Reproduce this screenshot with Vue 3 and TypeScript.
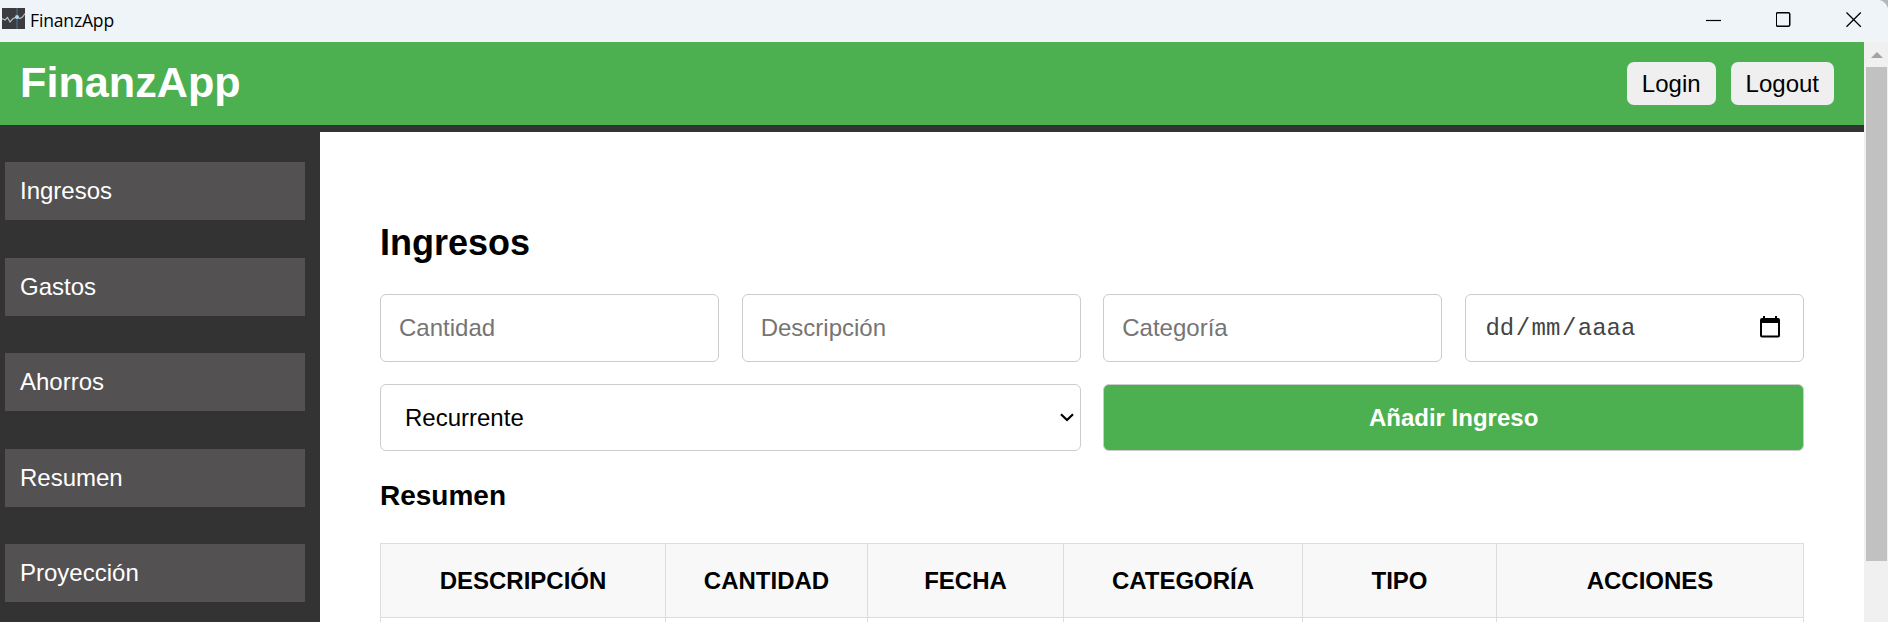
<script setup lang="ts">
import { ref } from 'vue'

interface Column {
  label: string
  width: number
}

const sections: string[] = ['Ingresos', 'Gastos', 'Ahorros', 'Resumen', 'Proyección']

const columns: Column[] = [
  { label: 'Descripción', width: 285 },
  { label: 'Cantidad', width: 202 },
  { label: 'Fecha', width: 196 },
  { label: 'Categoría', width: 239 },
  { label: 'Tipo', width: 194 },
  { label: 'Acciones', width: 307 },
]

const amount = ref('')
const description = ref('')
const category = ref('')
const kind = ref('Recurrente')
</script>

<template>
  <div class="window">
    <div class="titlebar">
      <svg class="app-icon" width="23" height="21" viewBox="0 0 23 21">
        <rect width="23" height="21" fill="#3a3c3f" />
        <path d="M15 0V21" stroke="#54728c" stroke-width="1" />
        <path d="M0 10.500L3 12L5.500 9.500L8 14L11 10.500L15 9L18 10.500L20.500 9L23 5.500" fill="none" stroke="#b9bec2" stroke-width="1.200" />
        <circle cx="15" cy="9" r="2" fill="#b4d3ee" />
      </svg>
      <span class="app-name">FinanzApp</span>
      <div class="controls">
        <svg width="16" height="16" viewBox="0 0 16 16"><path d="M0 8.500H15" stroke="#000" stroke-width="1.200" /></svg>
        <svg width="16" height="16" viewBox="0 0 16 16"><rect x=".25" y=".75" width="13.500" height="13.500" rx="1.500" fill="none" stroke="#000" stroke-width="1.500" /></svg>
        <svg width="16" height="16" viewBox="0 0 16 16"><path d="M.5 .5L14.800 14.800M14.800 .5L.5 14.800" stroke="#000" stroke-width="1.300" /></svg>
      </div>
    </div>

    <div class="viewport">
      <div class="page">
        <header class="header">
          <h1>FinanzApp</h1>
          <div class="session">
            <button type="button">Login</button>
            <button type="button">Logout</button>
          </div>
        </header>

        <div class="body">
          <nav class="sidebar">
            <a v-for="name in sections" :key="name">{{ name }}</a>
          </nav>

          <main class="content">
            <h2>Ingresos</h2>
            <form class="form" @submit.prevent>
              <input v-model="amount" class="field" placeholder="Cantidad" />
              <input v-model="description" class="field" placeholder="Descripción" />
              <input v-model="category" class="field" placeholder="Categoría" />
              <div class="field date">
                <span class="date-text"><span class="part">dd</span>/<span class="part">mm</span>/<span class="part">aaaa</span></span>
                <svg width="20" height="22" viewBox="0 0 20 22">
                  <path d="M3 0H5V2H15V0H17V2H18Q20 2 20 4V19.500Q20 21.500 18 21.500H2Q0 21.500 0 19.500V4Q0 2 2 2H3ZM2 7V19.500H18V7Z" fill="#000" fill-rule="evenodd" />
                </svg>
              </div>
              <div class="field wide choice">
                <span>{{ kind }}</span>
                <svg width="14" height="9" viewBox="0 0 14 9"><path d="M1 1.200L7 7L13 1.200" fill="none" stroke="#000" stroke-width="2.200" /></svg>
              </div>
              <button class="field wide submit" type="submit">Añadir Ingreso</button>
            </form>

            <h3>Resumen</h3>
            <table class="table">
              <colgroup>
                <col v-for="c in columns" :key="c.label" :style="{ width: c.width + 'px' }" />
              </colgroup>
              <thead>
                <tr><th v-for="c in columns" :key="c.label">{{ c.label }}</th></tr>
              </thead>
              <tbody>
                <tr><td v-for="c in columns" :key="c.label"></td></tr>
              </tbody>
            </table>
          </main>
        </div>
      </div>

      <div class="scrollbar">
        <svg width="12" height="6" viewBox="0 0 12 6"><path d="M6 0L12 6H0Z" fill="#a3a3a3" /></svg>
        <div class="thumb"></div>
      </div>
    </div>
  </div>
</template>

<style>
html,
body {
  margin: 0;
  overflow: hidden;
  background: #b5b8ba;
}
</style>

<style scoped>
.window {
  width: 1888px;
  height: 622px;
  display: flex;
  flex-direction: column;
  overflow: hidden;
  border-top-right-radius: 11px;
  font-family: 'Liberation Sans', Arial, sans-serif;
  font-size: 24px;
  color: #000;
  background: #fff;
}

.window * {
  box-sizing: border-box;
}

.titlebar {
  flex: none;
  height: 42px;
  display: flex;
  align-items: center;
  background: #eff4f8;
  padding: 0 26px 3px 2px;
}

.app-icon {
  margin-top: -2px;
}

.app-name {
  margin-left: 5px;
  font-family: 'Open Sans', 'Noto Sans', sans-serif;
  font-size: 17.5px;
  line-height: 24px;
  letter-spacing: -0.15px;
}

.controls {
  margin-left: auto;
  display: flex;
  gap: 54px;
}

.controls svg {
  display: block;
}

.viewport {
  flex: 1;
  min-height: 0;
  display: flex;
}

.page {
  width: 1864px;
  display: flex;
  flex-direction: column;
}

.header {
  flex: none;
  height: 90px;
  border-bottom: 7px solid #333;
  background: #4caf50;
  display: flex;
  align-items: center;
  justify-content: space-between;
  padding: 0 30px 0 20px;
}

h1 {
  margin: 0 0 3px;
  font-size: 43.2px;
  line-height: 50px;
  color: #fff;
}

.session {
  display: flex;
  gap: 15px;
}

.session button {
  height: 43px;
  padding: 0 15px;
  border: 0;
  border-radius: 7px;
  background: #efefef;
  font: inherit;
  color: #000;
}

.body {
  flex: 1;
  min-height: 0;
  display: flex;
}

.sidebar {
  flex: none;
  width: 320px;
  background: #333;
  padding: 30px 15px 0 5px;
  display: flex;
  flex-direction: column;
  gap: 37.5px;
}

.sidebar a {
  flex: none;
  height: 58px;
  line-height: 58px;
  padding-left: 15px;
  background: #535151;
  color: #fff;
}

.content {
  flex: 1;
  padding: 90px 60px 0;
  overflow: hidden;
}

h2 {
  margin: 0 0 31px;
  font-size: 36px;
  line-height: 41px;
}

.form {
  display: grid;
  grid-template-columns: repeat(4, 1fr);
  grid-template-rows: 68px 67px;
  gap: 22px 22.5px;
}

.field {
  width: 100%;
  min-width: 0;
  height: 100%;
  padding: 0 18px;
  border: 1px solid #ccc;
  border-radius: 6px;
  background: #fff;
  font: inherit;
  color: #000;
  outline: none;
}

.field::placeholder {
  color: #757575;
  opacity: 1;
}

.date,
.choice {
  display: flex;
  align-items: center;
  justify-content: space-between;
}

.date {
  padding-right: 23px;
}

.date svg {
  margin-top: -2px;
}

.date-text {
  font-family: 'Liberation Mono', monospace;
  color: #444;
}

.part {
  padding: 0 1.5px;
}

.wide {
  grid-column: span 2;
}

.choice {
  padding: 0 6px 0 24px;
}

.field.submit {
  background: #4caf50;
  color: #fff;
  font-weight: bold;
}

h3 {
  margin: 28px 0 31px;
  font-size: 28px;
  line-height: 33px;
}

.table {
  width: 1424px;
  table-layout: fixed;
  border-collapse: separate;
  border-spacing: 0;
  border-top: 1px solid #ddd;
  border-left: 1px solid #ddd;
}

th,
td {
  border-right: 1px solid #ddd;
  border-bottom: 1px solid #ddd;
  height: 74px;
  padding: 0;
}

th {
  background: #f8f8f8;
  text-transform: uppercase;
  font-weight: bold;
}

.scrollbar {
  width: 24px;
  background: #f0f0f0;
  display: flex;
  flex-direction: column;
  align-items: center;
  padding: 10px 1px 0 2px;
}

.scrollbar svg {
  display: block;
}

.thumb {
  width: 21px;
  height: 494px;
  margin-top: 9px;
  background: #c1c1c1;
}
</style>
